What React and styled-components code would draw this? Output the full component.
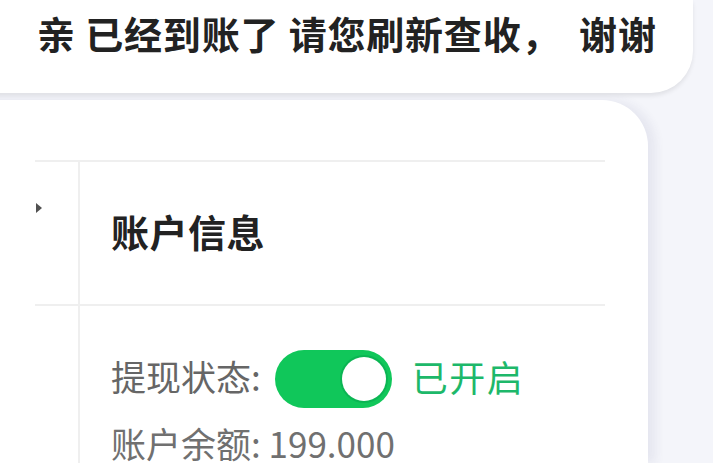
import React from "react";
import styled, { createGlobalStyle } from "styled-components";

const Global = createGlobalStyle`
  html, body {
    margin: 0;
    padding: 0;
    background: #f4f5fa;
    overflow: hidden;
  }
  body {
    font-family: "Noto Sans CJK SC", "Noto Sans", sans-serif;
  }
`;

const Page = styled.div`
  width: 713px;
  height: 463px;
  display: flex;
  flex-direction: column;
  overflow: hidden;
  background: #f4f5fa;
`;

const Bubble = styled.div`
  margin-left: -40px;
  width: 733px;
  height: 93px;
  box-sizing: border-box;
  padding: 11px 0 0 77px;
  background: #ffffff;
  border-radius: 0 0 42px 0;
  box-shadow: 0 3px 4px rgba(0, 0, 0, 0.08);
  font-size: 38px;
  line-height: 44px;
  letter-spacing: 0.8px;
  font-weight: 700;
  color: #222222;
  white-space: pre;
  flex-shrink: 0;
`;

const Card = styled.div`
  margin-top: 7px;
  margin-left: -40px;
  width: 688px;
  flex: 1;
  box-sizing: border-box;
  padding: 60px 43px 0 75px;
  background: #ffffff;
  border-radius: 0 46px 0 0;
  box-shadow: 8px 0 10px rgba(60, 60, 110, 0.07);
`;

const Table = styled.div`
  display: grid;
  grid-template-columns: 45px 1fr;
  grid-template-rows: 144px auto;
  border-top: 2px solid #efefef;
  height: 100%;
`;

const Side = styled.div`
  border-right: 2px solid #efefef;
  border-bottom: ${(p) => (p.$divider ? "2px solid #efefef" : "none")};
`;

const Mark = styled.svg`
  display: block;
  margin-top: 40px;
`;

const HeadCell = styled.div`
  display: flex;
  align-items: center;
  padding: 0 0 4px 31px;
  border-bottom: 2px solid #efefef;
`;

const Heading = styled.div`
  font-size: 38px;
  letter-spacing: 0.5px;
  font-weight: 700;
  color: #222222;
  line-height: 1;
`;

const Body = styled.div`
  display: flex;
  flex-direction: column;
  padding: 44px 0 0 31px;
  gap: 15px;
`;

const Line = styled.div`
  display: flex;
  align-items: center;
  height: ${(p) => (p.$compact ? "40px" : "58px")};
  line-height: 40px;
  font-size: 35px;
  color: ${(p) => p.$color || "#666666"};
  white-space: pre;
`;

const Label = styled.span`
  margin-bottom: 6px;
`;

const Toggle = styled.div`
  margin-left: 14px;
  width: 117px;
  height: 58px;
  border-radius: 29px;
  background: #10c75a;
  display: flex;
  align-items: center;
  justify-content: flex-end;
  padding-right: 6px;
  box-sizing: border-box;
  flex-shrink: 0;
`;

const Knob = styled.div`
  width: 44px;
  height: 44px;
  border-radius: 50%;
  background: #ffffff;
  box-shadow: 0 0 0 2px #0bb553;
`;

const State = styled.span`
  margin: 0 0 6px 20px;
  color: #1db86a;
  font-size: 36px;
  letter-spacing: 1.5px;
`;

export default function App() {
  return (
    <Page>
      <Global />
      <Bubble>亲 已经到账了 请您刷新查收，  谢谢</Bubble>
      <Card>
        <Table>
          <Side $divider>
            <Mark width="8" height="12" viewBox="0 0 8 12">
              <path d="M1 1 L7 6 L1 11 Z" fill="#333" opacity="0.85" />
            </Mark>
          </Side>
          <HeadCell>
            <Heading>账户信息</Heading>
          </HeadCell>
          <Side />
          <Body>
            <Line>
              <Label>提现状态:</Label>
              <Toggle>
                <Knob />
              </Toggle>
              <State>已开启</State>
            </Line>
            <Line $compact $color="#707070">账户余额: 199.000</Line>
          </Body>
        </Table>
      </Card>
    </Page>
  );
}
